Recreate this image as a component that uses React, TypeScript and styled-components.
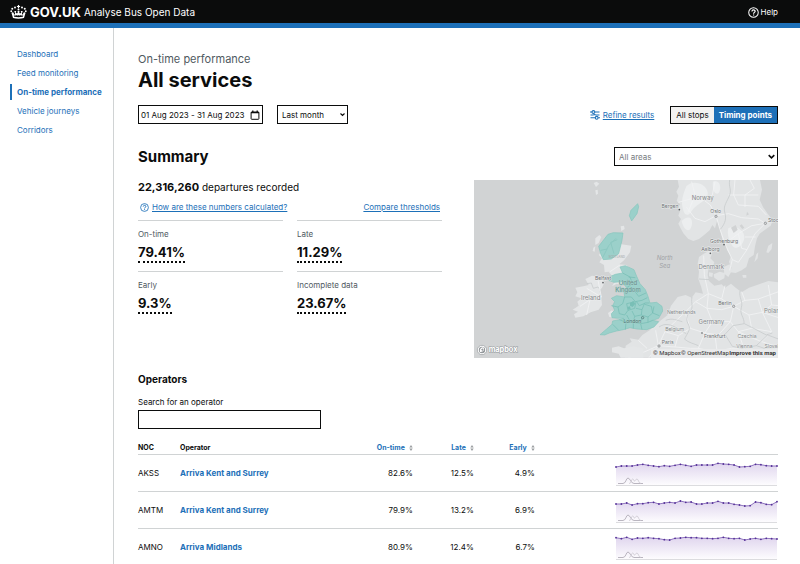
import React from "react";
import styled, { createGlobalStyle } from "styled-components";

const ink = "#0b0c0c";
const blue = "#1d70b8";
const grey = "#505a5f";
const line = "#d0d3d4";

const GlobalStyle = createGlobalStyle`
  * { box-sizing: border-box; }
  html { overflow: hidden; }
  body {
    margin: 0;
    background: #fff;
    color: ${ink};
    font-family: Inter, "Liberation Sans", sans-serif;
    font-size: 8px;
    line-height: 12px;
  }
  h1, h2, h3, p, dl, dd { margin: 0; }
  button, input, select { font: inherit; color: inherit; border-radius: 0; }
`;

const Header = styled.header`
  display: flex;
  align-items: center;
  justify-content: space-between;
  height: 28px;
  padding: 1px 22px 0 10px;
  background: ${ink};
  border-bottom: 5px solid ${blue};
  color: #fff;
`;

const Brand = styled.a`
  display: flex;
  align-items: center;
  gap: 3px;
  color: #fff;
  text-decoration: none;
  font-size: 10px;
  line-height: 16px;
`;

const BrandName = styled.span`
  font-size: 13px;
  font-weight: 700;
`;

const HelpLink = styled.a`
  display: flex;
  align-items: center;
  gap: 2px;
  color: #fff;
  text-decoration: none;
`;

const Shell = styled.div`
  display: grid;
  grid-template-columns: 114px minmax(0, 1fr);
  min-height: calc(100vh - 28px);
`;

const Sidebar = styled.nav`
  display: flex;
  flex-direction: column;
  gap: 3px;
  padding: 18px 0 0 10px;
  border-right: 1px solid ${line};
`;

const NavItem = styled.a<{ $current?: boolean }>`
  padding-left: 5px;
  line-height: 16px;
  border-left: 2px solid ${(p) => (p.$current ? blue : "transparent")};
  color: ${blue};
  font-weight: ${(p) => (p.$current ? 700 : 400)};
  text-decoration: none;
`;

const Main = styled.main`
  padding: 23px 22px 0 24px;
`;

const Caption = styled.p`
  color: ${grey};
  font-size: 11px;
  line-height: 16px;
`;

const PageTitle = styled.h1`
  font-size: 20px;
  font-weight: 700;
  line-height: 26px;
`;

const Filters = styled.div`
  display: flex;
  align-items: center;
  gap: 14px;
  margin-top: 12px;
`;

const DateButton = styled.button`
  display: flex;
  align-items: center;
  justify-content: space-between;
  width: 125px;
  height: 19px;
  padding: 0 2px;
  border: 1px solid ${ink};
  background: #fff;
`;

const SelectWrap = styled.div<{ $width: number }>`
  display: grid;
  grid-template-columns: minmax(0, 1fr);
  align-items: center;
  width: ${(p) => p.$width}px;
  & > * { grid-row: 1; grid-column: 1; }
  & > svg { justify-self: end; margin-right: 3px; pointer-events: none; }
`;

const Select = styled.select<{ $muted?: boolean }>`
  appearance: none;
  width: 100%;
  height: 19px;
  padding: 0 4px;
  border: 1px solid ${ink};
  background: #fff;
  color: ${(p) => (p.$muted ? "#777b7e" : ink)};
`;

const RefineLink = styled.a`
  display: flex;
  align-items: center;
  gap: 3px;
  margin-left: auto;
  color: ${blue};
  text-underline-offset: 1px;
`;

const Toggle = styled.div`
  display: flex;
  height: 18px;
  margin-left: 2px;
  border: 1px solid ${ink};
`;

const ToggleButton = styled.button<{ $active?: boolean }>`
  padding: 0 5px;
  border: 0;
  background: ${(p) => (p.$active ? blue : "#f3f2f1")};
  color: ${(p) => (p.$active ? "#fff" : ink)};
  font-weight: ${(p) => (p.$active ? 700 : 400)};
`;

const SummaryHead = styled.div`
  display: flex;
  align-items: center;
  justify-content: space-between;
  margin-top: 23px;
`;

const SectionTitle = styled.h2`
  font-size: 15px;
  line-height: 19px;
`;

const SummaryGrid = styled.div`
  display: grid;
  grid-template-columns: minmax(0, 1fr) minmax(0, 1fr);
  gap: 32px;
  margin-top: 14px;
`;

const Lead = styled.p`
  font-size: 10px;
  line-height: 15px;
  & strong { font-size: 11px; }
`;

const LinkRow = styled.div`
  display: flex;
  justify-content: space-between;
  padding: 6px 2px 7px;
`;

const TextLink = styled.a`
  display: flex;
  align-items: center;
  gap: 3px;
  color: ${blue};
  text-underline-offset: 1px;
`;

const Stats = styled.dl`
  display: grid;
  grid-template-columns: 1fr 1fr;
  column-gap: 14px;
`;

const Stat = styled.div`
  height: 51px;
  padding-top: 7px;
  border-top: 1px solid ${line};
`;

const StatLabel = styled.dt`
  color: ${grey};
`;

const StatValue = styled.dd`
  display: inline-block;
  margin-top: 3px;
  border-bottom: 2px dotted ${ink};
  font-size: 13px;
  font-weight: 700;
  line-height: 18px;
`;

const MapSvg = styled.svg`
  display: block;
  width: 100%;
  height: 178px;
  background: #d1d3d4;
  font-family: Inter, "Liberation Sans", sans-serif;
`;

const Credits = styled.g`
  font-family: Roboto, "Liberation Sans", sans-serif;
  font-size: 6px;
  fill: #333;
`;

const OperatorsTitle = styled.h3`
  margin-top: 14px;
  font-size: 10px;
  line-height: 14px;
`;

const SearchField = styled.div`
  display: flex;
  flex-direction: column;
  gap: 2px;
  width: 183px;
  margin-top: 10px;
`;

const SearchInput = styled.input`
  height: 19px;
  padding: 0 4px;
  border: 1px solid ${ink};
  background: #fff;
`;

const OperatorTable = styled.table`
  width: 100%;
  margin-top: 12px;
  border-collapse: separate;
  border-spacing: 0;
  table-layout: fixed;
`;

const Col = styled.col<{ $w: string }>`
  width: ${(p) => p.$w};
`;

const HeadCell = styled.th<{ $right?: boolean }>`
  height: 14px;
  padding: 0;
  border-bottom: 1px solid ${line};
  font-size: 7px;
  text-align: ${(p) => (p.$right ? "right" : "left")};
`;

const SortButton = styled.button`
  display: inline-flex;
  align-items: center;
  gap: 4px;
  padding: 0;
  border: 0;
  background: none;
  color: ${blue};
  font-weight: 700;
`;

const Cell = styled.td<{ $right?: boolean }>`
  height: 37px;
  padding: 0;
  border-bottom: 1px solid ${line};
  text-align: ${(p) => (p.$right ? "right" : "left")};
`;

const OperatorLink = styled.a`
  color: ${blue};
  font-weight: 700;
  text-decoration: none;
`;

const Spark = styled.svg`
  display: block;
  width: 163px;
  height: 26px;
  margin: 2px 0 0 auto;
`;

const HiddenText = styled.span`
  position: absolute;
  width: 1px;
  height: 1px;
  overflow: hidden;
  clip-path: inset(50%);
`;

const Crown = () => (
  <svg width="17" height="14" viewBox="0 0 34 28" fill="#fff" aria-hidden="true">
    <path d="M15.800 0h2.400v2h2v2h-2v2.500h-2.400V4h-2V2h2z" />
    <circle cx="10" cy="5" r="2" />
    <circle cx="24" cy="5" r="2" />
    <circle cx="4.500" cy="7.500" r="2" />
    <circle cx="29.500" cy="7.500" r="2" />
    <circle cx="2.500" cy="12.500" r="1.900" />
    <circle cx="31.500" cy="12.500" r="1.900" />
    <circle cx="17" cy="9" r="2" />
    <path d="M6 26 3 16c1.500-2 3-2 4.500 0l.5 3c1.500 0 2.500-1 2-2.500L8.500 12h4l-1 3.500c1.500 1.500 3 1.500 4 0L15 12h4l-.5 3.500c1 1.500 2.500 1.500 4 0l-1-3.500h4L24 16.500c-.5 1.500.5 2.500 2 2.500l.5-3c1.500-2 3-2 4.500 0l-3 10c-7 1.800-15 1.800-22 0zM8.500 23.500c5.500 1.200 11.500 1.200 17 0l1-2.500c-3 .6-4.500-.2-5-1-1.500 1.500-3.500 1.200-4.500-.2-1 1.400-3 1.700-4.500.2-.5.800-2 1.600-5 1z" />
  </svg>
);

const HelpIcon = ({ size }: { size: number }) => (
  <svg width={size} height={size} viewBox="0 0 12 12" fill="none" stroke="currentColor" aria-hidden="true">
    <circle cx="6" cy="6" r="5.200" strokeWidth="1.100" />
    <path d="M4.300 4.800c0-2.300 3.500-2.200 3.500-.2 0 1.300-1.700 1.300-1.700 2.700M6.100 8.300v1.100" strokeWidth="1.300" />
  </svg>
);

const CalendarIcon = () => (
  <svg width="10" height="10" viewBox="0 0 10 10" fill="none" stroke={ink} aria-hidden="true">
    <rect x="1.100" y="2" width="7.800" height="7.300" rx="0.600" strokeWidth="1" />
    <path d="M1 2.600h8M2.800.4v1.800M7.200.4v1.800" strokeWidth="1.300" />
  </svg>
);

const Chevron = ({ size = 5 }: { size?: number }) => (
  <svg width={size} height={size} viewBox="0 0 6 6" fill="none" stroke={ink} strokeWidth="1.300" aria-hidden="true">
    <path d="M.6 1.800 3 4.200l2.400-2.400" />
  </svg>
);

const SlidersIcon = () => (
  <svg width="10" height="10" viewBox="0 0 10 10" fill="none" stroke={blue} strokeWidth="1.100" aria-hidden="true">
    <path d="M0 2h2M5 2h4.500M.5 7.800h4.700M8.200 7.800H10M.5 5h2.500L4.500 4.500 6 5h3.500" />
    <circle cx="3.400" cy="2" r="1.400" fill="#fff" />
    <circle cx="6.700" cy="7.800" r="1.400" fill="#fff" />
  </svg>
);

const SortIcon = () => (
  <svg width="4" height="6" viewBox="0 0 4 6" fill="#9a9da0" aria-hidden="true">
    <path d="M2 0l1.700 2.500H.3zM2 6 .3 3.500h3.400z" />
  </svg>
);

const roads = { fill: "none", stroke: "#f1f2f3", strokeWidth: 2.6 } as const;
const borders = { fill: "none", stroke: "#c6c9cb", strokeWidth: 2.2 } as const;

const East = () => (
  <g transform="translate(151 -5) scale(.33333)">
    <g fill="#e2e4e5">
      <path d="M158 15 162 35 154 50 160 62 155 78 166 88 158 98 165 108 160 122 168 132 160 146 166 158 175 175 190 192 205 198 222 192 240 178 254 166 262 150 270 160 276 138 282 150 288 176 293 196 302 205 306 226 318 244 312 260 320 280 316 292 332 294 350 286 364 276 372 250 386 240 390 214 396 190 404 176 420 164 437 152 443 136 428 116 414 96 404 74 411 44 405 15Z" />
      <path d="M424 232 430 212 442 204 440 222 430 234ZM388 262 394 238 400 232 398 250ZM352 300h12v8h-10Z" />
      <path d="M220 312 222 290 218 266 222 246 236 236 256 226 262 232 256 250 268 262 262 276 250 282 248 300 252 318 268 332 290 328 300 338 318 326 332 338 350 352 372 338 396 330 430 318 461 322 461 548 0 548 2 512 20 500 14 490 40 494 52 480 74 466 88 452 108 436 128 420 138 392 158 366 182 360 200 368 212 352 234 356 228 334Z" />
      <path d="M266 298 284 290 300 294 298 310 282 318 268 308ZM296 276 314 268 322 284 310 306 298 296ZM252 292 264 294 262 306 252 304Z" />
    </g>
    <g fill="#eceeef">
      <path d="M184 34c20-22 60-8 64 18s-34 34-48 56-24 10-28-14 6-44 12-60ZM170 138c20-20 36-10 30 14s-24 14-30-14Z" />
      <path d="M310 160c20-12 50 6 48 28s-24 40-36 24-16-36-12-52ZM264 20c16-6 26 10 20 28s-24 4-20-28Z" />
    </g>
    <path d="M318 158l14-8 6 14-12 10ZM344 152l6-4 8 10-6 4ZM366 110l6 8-8 4Z" fill="#d1d3d4" />
    <g {...roads}>
      <path d="M160 82 196 72 230 78 262 60 270 20M273 122 256 90 240 78M273 122 284 160 300 206 322 254 340 262 366 224 390 176 421 145M273 122 310 116 350 128 400 132 421 145M322 254 314 286M300 206 340 176 380 152 421 145M330 15 326 60 340 90 400 94 424 120M375 15 388 40 360 60 360 96M310 60 400 60M360 186 392 186M340 176 350 220 366 224M184 96 210 130 240 140 273 122M200 20 210 60 190 110" />
      <path d="M236 242 238 300 250 356 246 400 262 440 240 474 220 520 224 548M250 356 290 372 326 394 360 376 400 372 461 350M250 356 212 380 180 412 150 440 120 470 100 512 60 530 10 548M326 394 316 440 340 470 370 484 410 500 461 516M326 394 372 420 412 412 461 428M262 440 316 440M240 474 280 480 316 440M180 412 196 460 240 474M120 470 160 482 196 460M100 512 150 516 196 520 220 520M100 512 92 466M100 512 72 548M340 470 356 520 400 548M372 420 380 460 340 470M400 372 412 412 440 470 410 500M290 372 300 332M212 380 246 400 290 404 326 394M220 520 270 530 320 520 356 520M360 376 350 350M40 496 66 520M150 516 160 482M412 412 440 390 461 392M430 330 440 390M270 480 276 528M380 460 440 470" />
    </g>
    <g {...borders}>
      <path d="M314 15c-4 24 8 28-2 50s-18 30-12 50-4 36-14 48" />
      <path d="M345 348c-4 20 10 30 4 50s10 30 8 48M201 366c-4 20 6 30-6 44s-12 26-4 40-8 30-12 42M102 456c20-14 36-6 52 2s20 14 30 18M122 436c20-8 34 0 50 4M178 492c14 12 30 14 42 20M300 478l24-26 34-6 24 12 42 22 18-6M300 478l22 36 28 6 44-8 34-32M354 516l-10 20M428 480l32 12M222 312l30 2M394 512l24 8 42-6" />
    </g>
    <path d="M18 106 38 86 41 95 36 116 20 138 13 122Z" fill="#9bd0ca" stroke="#85c5bd" strokeWidth="2" />
    <g textAnchor="middle" fill="#85888b" fontSize="15" stroke="#eceeee" strokeWidth="3" paintOrder="stroke" strokeLinejoin="round">
      <g fontSize="18">
        <text x="233" y="75">Norway</text>
        <text x="259" y="281">Denmark</text>
        <text x="259" y="446">Germany</text>
        <text x="446" y="414">Poland</text>
      </g>
      <text x="169" y="418">Netherlands</text>
      <text x="149" y="468">Belgium</text>
      <text x="366" y="490">Czechia</text>
      <text x="358" y="519">Vienna</text>
      <text x="448" y="519">Slovakia</text>
      <g fill="#6c7073" fontSize="15">
        <text x="135" y="100">Bergen</text>
        <text x="272" y="115">Oslo</text>
        <text x="429" y="141" textAnchor="start">Stockholm</text>
        <text x="297" y="203">Gothenburg</text>
        <text x="256" y="227">Aalborg</text>
        <text x="300" y="389">Berlin</text>
        <text x="269" y="488">Frankfurt</text>
        <text x="128" y="507">Paris</text>
      </g>
      <g fill="#9fa2a5" fontSize="18" fontStyle="italic" stroke="none">
        <text x="119" y="254">North</text>
        <text x="119" y="279">Sea</text>
      </g>
    </g>
    <g fill="#55595c">
      <circle cx="163" cy="104" r="2.500" />
      <circle cx="297" cy="209" r="2.500" />
      <circle cx="256" cy="235" r="2.500" />
      <circle cx="231" cy="474" r="2.500" />
    </g>
    <g fill="#ddd" stroke="#777b7e" strokeWidth="2">
      <circle cx="273" cy="124" r="3.500" />
      <circle cx="421" cy="145" r="3.500" />
      <circle cx="326" cy="394" r="3.500" />
      <circle cx="102" cy="513" r="3.500" />
    </g>
  </g>
);

const West = () => (
  <g transform="translate(-4 -5) scale(.33333)">
    <g fill="#e4e6e7">
      <path d="M371 24 380 20 388 26 378 36ZM376 46 383 44 384 56 378 60ZM452 154 462 152 464 162 454 168ZM376 190 388 180 394 186 386 204 376 210ZM370 218 376 214 374 230 368 228Z" />
      <path d="M420 200 440 190 454 208 484 212 480 232 462 256 448 268 470 270 486 288 474 324 460 330 440 326 426 334 436 318 424 322 430 308 416 290 404 292 402 270 388 262 396 250 386 240Z" />
      <path d="M346 312 366 302 392 306 404 322 396 338 388 348 394 366 396 390 386 404 362 412 340 424 316 428 312 418 324 410 308 404 326 392 322 380 334 370 316 364 322 352 316 338 340 334 356 330Z" />
      <path d="M426 518 446 514 462 520 490 514 520 520 520 548 452 548 446 536 426 532Z" />
      <path d="M414 414 426 406 440 420 460 424 456 434 436 428 418 426Z" />
    </g>
    <g {...borders}>
      <path d="M350 326l14-2 6 16 14-4 8 10" />
    </g>
    <g {...roads}>
      <path d="M394 366l-34 8-30 20M360 374l-10 46M394 366l-10-50M350 340l44 26" />
      <path d="M420 290l30-20M438 300l30-4 4 20" />
    </g>
    <g fill="#9bd0ca" stroke="#85c5bd" strokeWidth="2" strokeLinejoin="round">
      <path d="M386 214 414 178 430 173 459 174 456 196 446 236 424 252 400 254 392 236Z" />
      <path d="M450 276 466 272 492 284 500 304 510 326 526 344 534 364 540 384 560 382 576 394 578 408 566 430 548 436 566 440 552 456 530 464 500 462 480 458 460 464 440 468 418 474 404 480 390 479 410 462 426 448 428 438 448 434 460 430 444 430 426 428 424 416 434 406 428 392 434 380 424 370 440 362 464 366 462 350 470 338 456 320 432 322 416 316 418 306 436 298 458 294Z" />
    </g>
    <path d="M398 248l18-36 22-22M432 236l-10-34 20-8M392 226l20-4" fill="none" stroke="#8dc8c1" strokeWidth="3" />
    <g fill="none" stroke="#73bbb2" strokeWidth="2">
      <path d="M458 294l22 12 8 20-18 12 22 8 14 18 22-10M488 326l16-10M464 366l20 0 12 14 20-4 16-8M424 392l20 4 14-10 6-20M444 396l4 20 16 4 10-14-4-20M470 386l26-6M474 406l20-6 4-20M498 400l18 4 8-20 14 0M516 404l-2 16-20 4-8-16M514 420l20 6 14-12-4-20-20-6M534 426l0 16 14-6M494 424l-4 18 22 4 4-22M490 442l-22 0-8-12M512 446l22-4M468 442l-2 22M490 442l0 18M512 446l4 18M428 448l18 18M448 434l20 8M548 414l20 8M552 394l-4 20M500 380l8 12 14-6M476 306l20 2M470 420l12 22M484 346l-20 8" />
    </g>
    <g fill="#79bfb6">
      <path d="M480 384l10-6 6 8-8 10-8-4ZM496 344l8-4 6 8-8 6ZM472 396l8-2 2 8-8 2Z" />
    </g>
    <g textAnchor="middle" fill="#85888b" fontSize="18" stroke="#eceeee" strokeWidth="2.500" paintOrder="stroke" strokeLinejoin="round">
      <text x="362" y="374">Ireland</text>
      <g stroke="#a5d3cd" fill="#6a8d8a">
        <text x="474" y="330">United</text>
        <text x="474" y="352">Kingdom</text>
        <text x="487" y="444" fontSize="15" fill="#4d706d">London</text>
      </g>
      <text x="399" y="316" fontSize="15" fill="#6c7073">Belfast</text>
      <text x="440" y="249" fontSize="9" fill="#a0a3a5" stroke="none">SCOTLAND</text>
    </g>
    <circle cx="399" cy="323" r="2.500" fill="#55595c" />
    <circle cx="518" cy="428" r="3.500" fill="none" stroke="#4f6f6c" strokeWidth="2" />
    <g>
      <circle cx="36" cy="525" r="14" fill="#fff" stroke="#92979a" strokeWidth="2" />
      <circle cx="36" cy="525" r="9.500" fill="#92979a" />
      <path d="M30 531c-2-9 3-14 10-14 5 7 0 15-10 14Z" fill="#fff" />
      <path d="M37 519l1.500 3.500 3.500 1.500-3.500 1.500L37 529l-1.500-3.500L32 524l3.500-1.500Z" fill="#92979a" />
      <text x="56" y="531" fontSize="22" fontWeight="700" fill="#fff" stroke="#92979a" strokeWidth="3" paintOrder="stroke">mapbox</text>
    </g>
  </g>
);

const CoverageMap = () => (
  <MapSvg viewBox="0 0 304 178" preserveAspectRatio="xMidYMid slice" role="img" aria-label="Map of service areas">
    <East />
    <West />
    <rect x="177" y="169" width="127" height="9" fill="#e9eaeb" />
    <Credits>
      <a href="#mapbox"><text x="179" y="175">© Mapbox</text></a>
      <a href="#osm"><text x="207" y="175">© OpenStreetMap</text></a>
      <a href="#improve"><text x="302" y="175" textAnchor="end" fontWeight="700">Improve this map</text></a>
    </Credits>
  </MapSvg>
);

type Row = { noc: string; name: string; onTime: string; late: string; early: string; trend: number[] };

const rows: Row[] = [
  { noc: "AKSS", name: "Arriva Kent and Surrey", onTime: "82.6%", late: "12.5%", early: "4.9%",
    trend: [12, 9, 9, 9, 6, 4, 7, 9, 11, 8, 10, 7, 4, 7, 10, 6, 6, 6, 6, 1, 3, 4, 6, 12, 11, 10, 4, 5, 8, 9, 9] },
  { noc: "AMTM", name: "Arriva Kent and Surrey", onTime: "79.9%", late: "13.2%", early: "6.9%",
    trend: [12, 12, 9, 15, 11, 11, 8, 7, 12, 9, 7, 9, 3, 7, 6, 12, 12, 9, 9, 4, 9, 9, 13, 15, 18, 17, 6, 8, 13, 14, 5] },
  { noc: "AMNO", name: "Arriva Midlands", onTime: "80.9%", late: "12.4%", early: "6.7%",
    trend: [2, 5, 1, 7, 3, 4, 2, 4, 5, 8, 9, 4, 3, 1, 2, 2, 4, 4, 5, 4, 1, 4, 5, 4, 9, 6, 4, 7, 4, 5, 6] },
];

const Sparkline = ({ data, id }: { data: number[]; id: string }) => {
  const pts = data.map((v, i) => [1 + (i * 161) / (data.length - 1), 2 + v / 3]);
  const path = pts.map(([x, y]) => `${x.toFixed(1)} ${y.toFixed(1)}`).join(" ");
  return (
    <Spark viewBox="0 0 163 26" role="img" aria-label="On-time trend">
      <defs>
        <linearGradient id={id} x1="0" y1="0" x2="0" y2="1">
          <stop offset="0" stopColor="#e0d6ee" />
          <stop offset="1" stopColor="#fdfcfe" />
        </linearGradient>
      </defs>
      <path d={`M1 24 ${path} 162 24Z`} fill={`url(#${id})`} />
      <path d="M1 24.500H162" stroke="#dcdcdf" />
      <path d="M3 22.500h5c3 0 3-5.500 5-5.500s3 5.500 6 5.500h9" fill="none" stroke="#a9a5b0" strokeWidth=".8" />
      <path d="M14 22.500c3 0 2-4.500 3.500-4.500s1 2 2 2 1-2 2.500-2 1.500 4.500 4 4.500" fill="none" stroke="#cbc8d0" strokeWidth=".8" />
      <path d={`M${path}`} fill="none" stroke="#8568b8" strokeWidth=".9" />
      {pts.map(([x, y]) => (
        <circle key={x} cx={x} cy={y} r=".9" fill="#542f97" />
      ))}
    </Spark>
  );
};

const navItems = ["Dashboard", "Feed monitoring", "On-time performance", "Vehicle journeys", "Corridors"];

const stats = [
  ["On-time", "79.41%"],
  ["Late", "11.29%"],
  ["Early", "9.3%"],
  ["Incomplete data", "23.67%"],
];

export default function App() {
  return (
    <>
      <GlobalStyle />
      <Header>
        <Brand href="#home">
          <Crown />
          <BrandName>GOV.UK</BrandName>
          <span>Analyse Bus Open Data</span>
        </Brand>
        <HelpLink href="#help">
          <HelpIcon size={11} />
          Help
        </HelpLink>
      </Header>
      <Shell>
        <Sidebar aria-label="Main">
          {navItems.map((item) => (
            <NavItem key={item} href="#nav" $current={item === "On-time performance"}>
              {item}
            </NavItem>
          ))}
        </Sidebar>
        <Main>
          <Caption>On-time performance</Caption>
          <PageTitle>All services</PageTitle>
          <Filters>
            <DateButton type="button">
              01 Aug 2023 - 31 Aug 2023
              <CalendarIcon />
            </DateButton>
            <SelectWrap $width={71}>
              <Select aria-label="Period">
                <option>Last month</option>
              </Select>
              <Chevron />
            </SelectWrap>
            <RefineLink href="#refine">
              <SlidersIcon />
              Refine results
            </RefineLink>
            <Toggle role="group" aria-label="Stops">
              <ToggleButton type="button">All stops</ToggleButton>
              <ToggleButton type="button" $active>Timing points</ToggleButton>
            </Toggle>
          </Filters>
          <SummaryHead>
            <SectionTitle>Summary</SectionTitle>
            <SelectWrap $width={164}>
              <Select aria-label="Area" $muted>
                <option>All areas</option>
              </Select>
              <Chevron size={7} />
            </SelectWrap>
          </SummaryHead>
          <SummaryGrid>
            <div>
              <Lead>
                <strong>22,316,260</strong> departures recorded
              </Lead>
              <LinkRow>
                <TextLink href="#how">
                  <HelpIcon size={9} />
                  How are these numbers calculated?
                </TextLink>
                <TextLink href="#thresholds">Compare thresholds</TextLink>
              </LinkRow>
              <Stats>
                {stats.map(([label, value]) => (
                  <Stat key={label}>
                    <StatLabel>{label}</StatLabel>
                    <StatValue>{value}</StatValue>
                  </Stat>
                ))}
              </Stats>
            </div>
            <CoverageMap />
          </SummaryGrid>
          <OperatorsTitle>Operators</OperatorsTitle>
          <SearchField>
            <label htmlFor="operator-search">Search for an operator</label>
            <SearchInput id="operator-search" type="text" />
          </SearchField>
          <OperatorTable>
            <colgroup>
              <Col $w="42px" />
              <Col $w="auto" />
              <Col $w="61px" />
              <Col $w="61px" />
              <Col $w="61px" />
              <Col $w="38%" />
            </colgroup>
            <thead>
              <tr>
                <HeadCell scope="col">NOC</HeadCell>
                <HeadCell scope="col">Operator</HeadCell>
                {["On-time", "Late", "Early"].map((h) => (
                  <HeadCell key={h} scope="col" $right>
                    <SortButton type="button">
                      {h}
                      <SortIcon />
                    </SortButton>
                  </HeadCell>
                ))}
                <HeadCell scope="col"><HiddenText>Trend</HiddenText></HeadCell>
              </tr>
            </thead>
            <tbody>
              {rows.map((r) => (
                <tr key={r.noc}>
                  <Cell>{r.noc}</Cell>
                  <Cell><OperatorLink href="#operator">{r.name}</OperatorLink></Cell>
                  <Cell $right>{r.onTime}</Cell>
                  <Cell $right>{r.late}</Cell>
                  <Cell $right>{r.early}</Cell>
                  <Cell><Sparkline data={r.trend} id={`trend-${r.noc}`} /></Cell>
                </tr>
              ))}
            </tbody>
          </OperatorTable>
        </Main>
      </Shell>
    </>
  );
}
